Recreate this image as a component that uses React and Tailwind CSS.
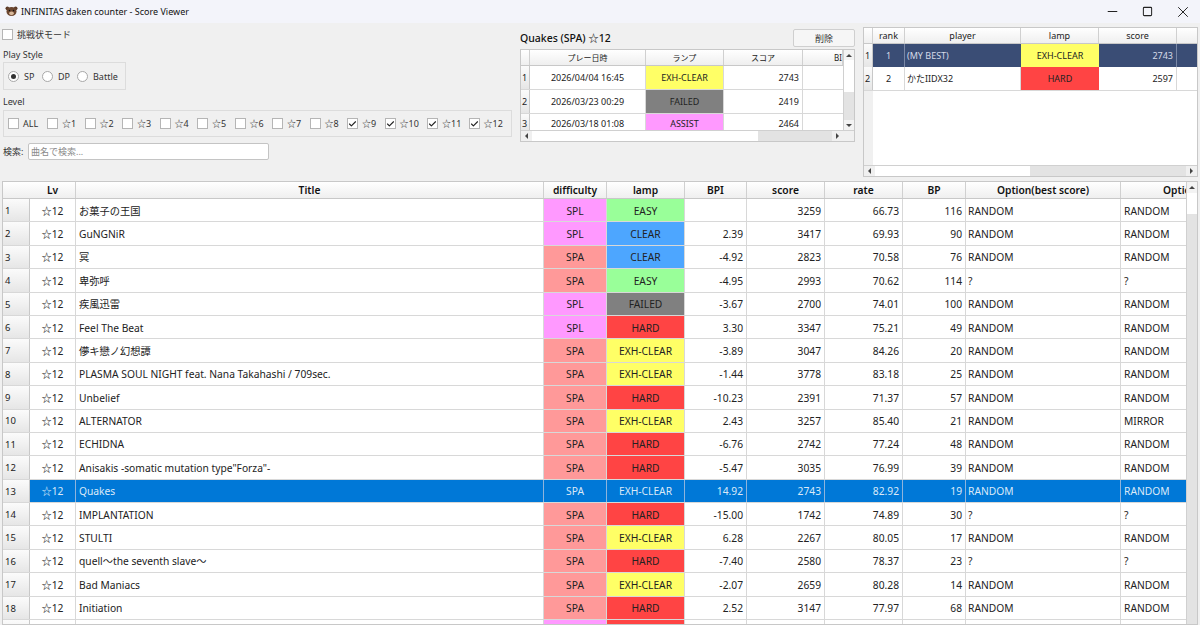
import { Minus, Square, X, Check } from 'lucide-react';

const DIFF = { SPL: 'bg-[#ff99ff]', SPA: 'bg-[#ff9999]' };
const LAMP = {
  EASY: 'bg-[#99ff99]',
  CLEAR: 'bg-[#4da6ff]',
  FAILED: 'bg-[#808080]',
  HARD: 'bg-[#ff4444]',
  'EXH-CLEAR': 'bg-[#ffff66]',
  ASSIST: 'bg-[#ff99ff]',
};

const songs = [
  ['お菓子の王国', 'SPL', 'EASY', '', '3259', '66.73', '116', 'RANDOM', 'RANDOM'],
  ['GuNGNiR', 'SPL', 'CLEAR', '2.39', '3417', '69.93', '90', 'RANDOM', 'RANDOM'],
  ['冥', 'SPA', 'CLEAR', '-4.92', '2823', '70.58', '76', 'RANDOM', 'RANDOM'],
  ['卑弥呼', 'SPA', 'EASY', '-4.95', '2993', '70.62', '114', '?', '?'],
  ['疾風迅雷', 'SPL', 'FAILED', '-3.67', '2700', '74.01', '100', 'RANDOM', 'RANDOM'],
  ['Feel The Beat', 'SPL', 'HARD', '3.30', '3347', '75.21', '49', 'RANDOM', 'RANDOM'],
  ['儚キ戀ノ幻想譚', 'SPA', 'EXH-CLEAR', '-3.89', '3047', '84.26', '20', 'RANDOM', 'RANDOM'],
  ['PLASMA SOUL NIGHT feat. Nana Takahashi / 709sec.', 'SPA', 'EXH-CLEAR', '-1.44', '3778', '83.18', '25', 'RANDOM', 'RANDOM'],
  ['Unbelief', 'SPA', 'HARD', '-10.23', '2391', '71.37', '57', 'RANDOM', 'RANDOM'],
  ['ALTERNATOR', 'SPA', 'EXH-CLEAR', '2.43', '3257', '85.40', '21', 'RANDOM', 'MIRROR'],
  ['ECHIDNA', 'SPA', 'HARD', '-6.76', '2742', '77.24', '48', 'RANDOM', 'RANDOM'],
  ['Anisakis -somatic mutation type"Forza"-', 'SPA', 'HARD', '-5.47', '3035', '76.99', '39', 'RANDOM', 'RANDOM'],
  ['Quakes', 'SPA', 'EXH-CLEAR', '14.92', '2743', '82.92', '19', 'RANDOM', 'RANDOM'],
  ['IMPLANTATION', 'SPA', 'HARD', '-15.00', '1742', '74.89', '30', '?', '?'],
  ['STULTI', 'SPA', 'EXH-CLEAR', '6.28', '2267', '80.05', '17', 'RANDOM', 'RANDOM'],
  ['quell〜the seventh slave〜', 'SPA', 'HARD', '-7.40', '2580', '78.37', '23', '?', '?'],
  ['Bad Maniacs', 'SPA', 'EXH-CLEAR', '-2.07', '2659', '80.28', '14', 'RANDOM', 'RANDOM'],
  ['Initiation', 'SPA', 'HARD', '2.52', '3147', '77.97', '68', 'RANDOM', 'RANDOM'],
];

const history = [
  ['2026/04/04 16:45', 'EXH-CLEAR', '2743'],
  ['2026/03/23 00:29', 'FAILED', '2419'],
  ['2026/03/18 01:08', 'ASSIST', '2464'],
];

const levels = [
  ['ALL', 'w-[39px]'],
  ['☆1', 'w-[37.5px]'],
  ['☆2', 'w-[37.5px]'],
  ['☆3', 'w-[37.5px]'],
  ['☆4', 'w-[37.5px]'],
  ['☆5', 'w-[37.5px]'],
  ['☆6', 'w-[37.5px]'],
  ['☆7', 'w-[37.5px]'],
  ['☆8', 'w-[37.5px]'],
  ['☆9', 'w-[37.5px]'],
  ['☆10', 'w-[42.5px]'],
  ['☆11', 'w-[41.5px]'],
  ['☆12', 'w-[40px]'],
];
const checkedLevels = ['☆9', '☆10', '☆11', '☆12'];

const headCell = 'flex items-center justify-center border-r border-[#d0d0d0] bg-gradient-to-b from-white to-[#efefef] overflow-hidden whitespace-nowrap';
const rowHead = 'flex items-center border-r border-[#c8c8c8] bg-gradient-to-b from-[#fbfbfb] to-[#e6e6e6] shrink-0';

const Bear = () => (
  <svg width="13" height="11" viewBox="0 0 14 12">
    <circle cx="2.5" cy="2.5" r="2" fill="#5b3a29" />
    <circle cx="11.5" cy="2.5" r="2" fill="#5b3a29" />
    <ellipse cx="7" cy="6" rx="5.5" ry="5" fill="#6b4630" />
    <ellipse cx="7" cy="8" rx="2.6" ry="2" fill="#d9b99b" />
    <circle cx="4.8" cy="5" r="0.8" fill="#111" />
    <circle cx="9.2" cy="5" r="0.8" fill="#111" />
  </svg>
);

const Box = ({ checked }) => (
  <span className="w-[11px] h-[11px] border border-[#b5b5b5] bg-white flex items-center justify-center shrink-0">
    {checked && <Check size={10} strokeWidth={3} className="text-[#222]" />}
  </span>
);

const Radio = ({ checked }) => (
  <span className="w-[11px] h-[11px] rounded-full border border-[#a8a8a8] bg-white flex items-center justify-center shrink-0">
    {checked && <span className="w-[5px] h-[5px] rounded-full bg-[#333]" />}
  </span>
);

const ArrowUp = () => <span className="w-0 h-0 border-x-[3px] border-x-transparent border-b-[3px] border-b-[#444]" />;
const ArrowDown = () => <span className="w-0 h-0 border-x-[3px] border-x-transparent border-t-[3px] border-t-[#444]" />;
const ArrowLeft = () => <span className="w-0 h-0 border-y-[3px] border-y-transparent border-r-[3px] border-r-[#444]" />;
const ArrowRight = () => <span className="w-0 h-0 border-y-[3px] border-y-transparent border-l-[3px] border-l-[#444]" />;

// main table column widths
const W = ['w-[46px]', 'w-[468px]', 'w-[63px]', 'w-[78px]', 'w-[62px]', 'w-[78px]', 'w-[78px]', 'w-[63px]', 'w-[155px]', 'w-[65px]'];
const HEAD = ['Lv', 'Title', 'difficulty', 'lamp', 'BPI', 'score', 'rate', 'BP', 'Option(best score)', 'Option'];

const SongRow = ({ song, index }) => {
  const [title, diff, lamp, bpi, score, rate, bp, opt, opt2] = song;
  const sel = index === 12;
  const cell = `h-full shrink-0 flex items-center pt-px border-r ${sel ? 'border-[#8fb4dc]' : 'border-[#d8d8d8]'}`;
  return (
    <div className={`flex h-[23.4px] shrink-0 border-b border-[#d8d8d8] ${sel ? 'bg-[#0078d7] text-[#dbe9f7]' : 'bg-white text-[#222]'}`}>
      <div className={`${rowHead} w-[27px] pl-[2px] pt-[1px] text-[9.5px] text-[#222]`}>{index + 1}</div>
      <div className={`${cell} ${W[0]} justify-center`}>☆12</div>
      <div className={`${cell} ${W[1]} pl-[3px] whitespace-nowrap`}>{title}</div>
      <div className={`${cell} ${W[2]} justify-center ${sel ? '' : DIFF[diff]}`}>{diff}</div>
      <div className={`${cell} ${W[3]} justify-center ${sel ? '' : LAMP[lamp]}`}>{lamp}</div>
      <div className={`${cell} ${W[4]} justify-end pr-[3px]`}>{bpi}</div>
      <div className={`${cell} ${W[5]} justify-end pr-[3px]`}>{score}</div>
      <div className={`${cell} ${W[6]} justify-end pr-[3px]`}>{rate}</div>
      <div className={`${cell} ${W[7]} justify-end pr-[3px]`}>{bp}</div>
      <div className={`${cell} ${W[8]} pl-[2px]`}>{opt}</div>
      <div className={`${cell} ${W[9]} pl-[3px] border-r-0`}>{opt2}</div>
    </div>
  );
};

export default function App() {
  return (
    <div className="w-[1200px] h-[625px] overflow-hidden bg-[#f0f0f0] text-[9px] leading-none text-[#222] font-['Noto_Sans','Noto_Sans_CJK_JP',sans-serif] flex flex-col">
      {/* title bar */}
      <div className="h-[23px] shrink-0 bg-[#f3f4fa] flex items-center pl-[5px]">
        <Bear />
        <span className="ml-[3px] text-[#111]">INFINITAS daken counter - Score Viewer</span>
        <div className="ml-auto mr-[-1px] flex items-center text-[#222]">
          <div className="w-[35.5px] flex justify-center"><Minus size={15} strokeWidth={1.6} /></div>
          <div className="w-[35.5px] flex justify-center"><Square size={11} strokeWidth={2.2} /></div>
          <div className="w-[35.5px] flex justify-center"><X size={18} strokeWidth={1.3} /></div>
        </div>
      </div>

      {/* top panels */}
      <div className="h-[158px] shrink-0 flex">
        <div className="w-[520px] shrink-0 pl-[3px] flex flex-col">
          <label className="h-[11px] mt-[6px] -ml-[1px] flex items-center gap-[4px] text-[#333]">
            <Box />
            <span>挑戦状モード</span>
          </label>
          <div className="mt-[8px] h-[13px] flex items-center text-[#333]">Play Style</div>
          <div className="mt-[1px] w-[123px] h-[28px] border border-[#dcdcdc] flex items-center pl-[4px] text-[#333]">
            <Radio checked />
            <span className="ml-[5px] w-[18px]">SP</span>
            <Radio />
            <span className="ml-[5px] w-[19px]">DP</span>
            <Radio />
            <span className="ml-[5px]">Battle</span>
          </div>
          <div className="mt-[5px] h-[13px] flex items-center text-[#333]">Level</div>
          <div className="mt-[2px] w-[509px] h-[27px] border border-[#dcdcdc] flex items-center pl-[4px] text-[#333]">
            {levels.map(([lv, w]) => (
              <div key={lv} className={`flex items-center gap-[4px] shrink-0 ${w}`}>
                <Box checked={checkedLevels.includes(lv)} />
                <span className="whitespace-nowrap">{lv}</span>
              </div>
            ))}
          </div>
          <div className="mt-[6px] flex items-center gap-[2px]">
            <span className="text-[#333] w-[23px] whitespace-nowrap">検索:</span>
            <div className="w-[241px] h-[17px] bg-white border border-[#c4c4c4] rounded-[2px] flex items-center pl-[2px] text-[#8a8a8a]">曲名で検索...</div>
          </div>
        </div>

        {/* play history */}
        <div className="w-[335px] shrink-0 flex flex-col pt-[4px]">
          <div className="h-[22px] flex items-center justify-between">
            <span className="text-[10.5px] font-medium text-[#111]">Quakes (SPA) ☆12</span>
            <button className="w-[62px] h-[18px] border border-[#cfcfcf] rounded-[2px] bg-[#f6f6f6] text-[#333]">削除</button>
          </div>
          <div className="w-[335px] h-[93px] border border-[#c8c8c8] bg-white flex flex-col overflow-hidden">
            <div className="flex flex-1 min-h-0">
              <div className="flex-1 flex flex-col min-w-0">
                <div className="h-[16px] flex shrink-0 border-b border-[#c8c8c8] text-[8px]">
                  <div className={`${headCell} w-[9px]`} />
                  <div className={`${headCell} w-[116px]`}>プレー日時</div>
                  <div className={`${headCell} w-[78px]`}>ランプ</div>
                  <div className={`${headCell} w-[79px]`}>スコア</div>
                  <div className={`${headCell} flex-1 justify-end`}>BI</div>
                </div>
                {history.map(([date, lamp, score], i) => (
                  <div key={date} className={`flex shrink-0 border-b border-[#d8d8d8] ${i === 2 ? 'h-[19px]' : 'h-[24px]'}`}>
                    <div className={`${rowHead} w-[9px] pl-[1px]`}>{i + 1}</div>
                    <div className="w-[116px] border-r border-[#d8d8d8] flex items-center justify-center">{date}</div>
                    <div className={`w-[78px] border-r border-[#d8d8d8] flex items-center justify-center ${LAMP[lamp]}`}>{lamp}</div>
                    <div className="w-[79px] border-r border-[#d8d8d8] flex items-center justify-end pr-[3px]">{score}</div>
                    <div className="flex-1" />
                  </div>
                ))}
              </div>
              <div className="w-[11px] shrink-0 bg-[#e3e3e3] border-l border-[#d0d0d0] flex flex-col">
                <div className="h-[10px] bg-[#f3f3f3] flex items-center justify-center"><ArrowUp /></div>
                <div className="h-[32px] bg-white" />
                <div className="flex-1" />
                <div className="h-[10px] bg-[#f3f3f3] flex items-center justify-center"><ArrowDown /></div>
              </div>
            </div>
            <div className="h-[11px] shrink-0 flex border-t border-[#d0d0d0] bg-[#f0f0f0]">
              <div className="w-[11px] flex items-center justify-center"><ArrowLeft /></div>
              <div className="w-[226px] bg-white" />
              <div className="w-[74px] bg-[#e3e3e3]" />
              <div className="w-[11px] flex items-center justify-center"><ArrowRight /></div>
            </div>
          </div>
        </div>

        {/* ranking */}
        <div className="ml-[8px] mt-[4px] w-[335px] h-[150px] border border-[#c8c8c8] bg-white flex flex-col overflow-hidden">
          <div className="h-[16px] shrink-0 flex border-b border-[#c8c8c8]">
            <div className={`${headCell} w-[9px]`} />
            <div className={`${headCell} w-[32px]`}>rank</div>
            <div className={`${headCell} w-[116px]`}>player</div>
            <div className={`${headCell} w-[78px]`}>lamp</div>
            <div className={`${headCell} w-[78px]`}>score</div>
            <div className={`${headCell} flex-1 border-r-0`} />
          </div>
          <div className="h-[23px] shrink-0 flex bg-[#3a4d75] text-[#d5dbe8]">
            <div className={`${rowHead} w-[9px] pl-[1px] text-[#222]`}>1</div>
            <div className="w-[32px] border-r border-[#7a88a6] flex items-center justify-center">1</div>
            <div className="w-[116px] flex items-center pl-[2px]">(MY BEST)</div>
            <div className={`w-[78px] flex items-center justify-center text-[#222] ${LAMP['EXH-CLEAR']}`}>EXH-CLEAR</div>
            <div className="w-[78px] border-r border-[#7a88a6] flex items-center justify-end pr-[3px]">2743</div>
          </div>
          <div className="h-[24px] shrink-0 flex border-b border-[#d8d8d8]">
            <div className={`${rowHead} w-[9px] pl-[1px]`}>2</div>
            <div className="w-[32px] border-r border-[#d8d8d8] flex items-center justify-center">2</div>
            <div className="w-[116px] border-r border-[#d8d8d8] flex items-center pl-[2px]">かたIIDX32</div>
            <div className={`w-[78px] flex items-center justify-center ${LAMP.HARD}`}>HARD</div>
            <div className="w-[78px] border-r border-[#d8d8d8] flex items-center justify-end pr-[3px]">2597</div>
          </div>
          <div className="flex-1 flex">
            <div className="w-[9px] bg-[#f0f0f0]" />
          </div>
          <div className="h-[11px] shrink-0 flex border-t border-[#d0d0d0] bg-[#f0f0f0]">
            <div className="w-[11px] flex items-center justify-center"><ArrowLeft /></div>
            <div className="w-[155px] bg-white" />
            <div className="flex-1 bg-[#e3e3e3]" />
            <div className="w-[11px] flex items-center justify-center"><ArrowRight /></div>
          </div>
        </div>
      </div>

      {/* song table */}
      <div className="ml-[2px] w-[1196px] flex-1 min-h-0 border border-[#c8c8c8] flex overflow-hidden text-[10.25px]">
        <div className="flex-1 min-w-0 flex flex-col">
          <div className="h-[17px] shrink-0 flex border-b border-[#c8c8c8] font-semibold text-[#111]">
            <div className={`${headCell} w-[27px] border-r-0`} />
            {HEAD.map((h, i) => (
              <div key={h} className={`${headCell} ${W[i]} shrink-0 ${i === 9 ? 'justify-start pl-[42px] border-r-0' : ''}`}>{h}</div>
            ))}
          </div>
          {songs.map((song, i) => <SongRow key={i} song={song} index={i} />)}
          {/* next row, only its top edge is in view */}
          <div className="flex h-[23.4px] shrink-0 bg-white">
            <div className={`${rowHead} w-[27px]`} />
            <div className="w-[46px] h-full shrink-0 border-r border-[#d8d8d8]" />
            <div className="w-[468px] h-full shrink-0 border-r border-[#d8d8d8]" />
            <div className={`w-[63px] h-full shrink-0 border-r border-[#d8d8d8] ${DIFF.SPL}`} />
            <div className={`w-[78px] h-full shrink-0 border-r border-[#d8d8d8] ${LAMP.HARD}`} />
            <div className="w-[62px] h-full shrink-0 border-r border-[#d8d8d8]" />
            <div className="w-[78px] h-full shrink-0 border-r border-[#d8d8d8]" />
            <div className="w-[78px] h-full shrink-0 border-r border-[#d8d8d8]" />
            <div className="w-[63px] h-full shrink-0 border-r border-[#d8d8d8]" />
            <div className="w-[155px] h-full shrink-0 border-r border-[#d8d8d8]" />
          </div>
        </div>
        <div className="w-[11px] shrink-0 bg-[#e3e3e3] border-l border-[#d0d0d0] flex flex-col">
          <div className="h-[11px] bg-[#f3f3f3] flex items-center justify-center"><ArrowUp /></div>
          <div className="h-[21px] bg-white" />
        </div>
      </div>
    </div>
  );
}
